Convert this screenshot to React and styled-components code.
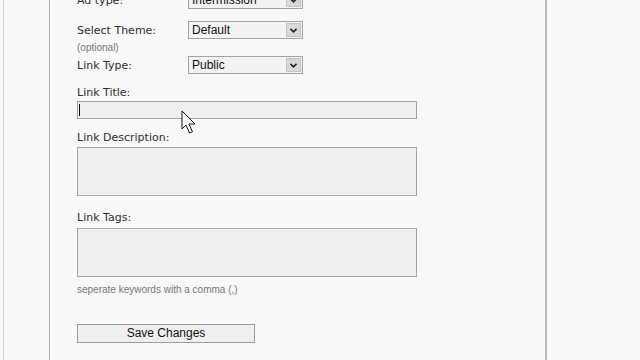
import React from "react";
import styled, {createGlobalStyle} from "styled-components";

const Global = createGlobalStyle`
  html, body {
    margin: 0;
    padding: 0;
    background: #f8f8f8;
    overflow: hidden;
  }
  body {
    font-family: "DejaVu Sans", Verdana, sans-serif;
  }
`

const Page = styled.div`
  position: relative;
  width: 640px;
  height: 360px;
  overflow: hidden;
  background: #f8f8f8;
  border-left: 1px solid #d4d4d4;
  margin-left: 3px;
  box-sizing: border-box;
`

const Panel = styled.div`
  width: 498px;
  height: 400px;
  margin-left: 45px;
  border-left: 1px solid #a8a8a8;
  border-right: 2px solid #bdbdbd;
  background: #f8f8f8;
  box-sizing: border-box;
`

const Form = styled.form`
  display: flex;
  flex-direction: column;
  padding-left: 27px;
  margin-top: -9px;
`

const Row = styled.div`
  display: grid;
  grid-template-columns: 111px 115px;
  align-items: center;
  margin-top: ${p => p.$top || 0}px;
`

const Label = styled.label`
  font-size: 11px;
  color: #2e2e2e;
  line-height: 13px;
  margin-top: ${p => p.$top || 0}px;
  margin-bottom: ${p => p.$bottom || 0}px;
`

const Note = styled.div`
  font-family: "Liberation Sans", Arial, sans-serif;
  font-size: 10px;
  color: #777;
  line-height: 11px;
  margin-top: ${p => p.$top || 0}px;
`

const SelectBox = styled.div`
  display: flex;
  align-items: stretch;
  height: 18px;
  box-sizing: border-box;
  border: 1px solid #a3a3a3;
  background: #f3f3f3;
  font-family: "Liberation Sans", Arial, sans-serif;
  font-size: 12px;
  color: #111;
`

const SelectValue = styled.span`
  flex: 1;
  padding-left: 3px;
  line-height: 16px;
`

const ArrowBox = styled.span`
  width: 15px;
  margin: 1px;
  background: #d8d8d8;
  border: 1px solid #c4c4c4;
  box-sizing: border-box;
  display: flex;
  align-items: center;
  justify-content: center;
`

const TextInput = styled.div`
  position: relative;
  width: 340px;
  height: 18px;
  box-sizing: border-box;
  border: 1px solid #a5a5a5;
  background: #efefef;
`

const Caret = styled.span`
  position: absolute;
  left: 1px;
  top: 2px;
  width: 1px;
  height: 12px;
  background: #111;
`

const TextArea = styled.div`
  width: 340px;
  height: 49px;
  box-sizing: border-box;
  border: 1px solid #a5a5a5;
  background: #efefef;
`

const Button = styled.button`
  width: 178px;
  height: 19px;
  margin-top: 29px;
  padding: 0;
  border: 1px solid #9c9c9c;
  background: #efefef;
  font-family: "Liberation Sans", Arial, sans-serif;
  font-size: 12px;
  color: #111;
  line-height: 17px;
`

const Pointer = styled.svg`
  position: absolute;
  left: 177px;
  top: 110px;
`

const Chevron = () => (
  <svg width="7" height="5" viewBox="0 0 7 5">
    <path d="M0.5 0.8 L3.5 3.8 L6.5 0.8" fill="none" stroke="#222" strokeWidth="1.6"/>
  </svg>
)

const Select = ({value}) => (
  <SelectBox>
    <SelectValue>{value}</SelectValue>
    <ArrowBox><Chevron/></ArrowBox>
  </SelectBox>
)

export default function App() {
  return <>
    <Global/>
    <Page>
      <Panel>
        <Form onSubmit={e => e.preventDefault()}>
          <Row>
            <Label>Ad type:</Label>
            <Select value="Intermission"/>
          </Row>
          <Row $top={12}>
            <Label>Select Theme:</Label>
            <Select value="Default"/>
          </Row>
          <Note $top={3}>(optional)</Note>
          <Row $top={3}>
            <Label>Link Type:</Label>
            <Select value="Public"/>
          </Row>
          <Label $top={12} $bottom={2}>Link Title:</Label>
          <TextInput><Caret/></TextInput>
          <Label $top={12} $bottom={3}>Link Description:</Label>
          <TextArea/>
          <Label $top={15} $bottom={4}>Link Tags:</Label>
          <TextArea/>
          <Note $top={7}>seperate keywords with a comma (,)</Note>
          <Button type="button">Save Changes</Button>
        </Form>
      </Panel>
      <Pointer width="16" height="26" viewBox="0 0 16 26">
        <path d="M1 1 L1 19 L5 15 L8.5 23 L11.5 21.8 L8 14 L14 14 Z" fill="#fff" stroke="#111" strokeWidth="1" strokeLinejoin="miter"/>
      </Pointer>
    </Page>
  </>
}
